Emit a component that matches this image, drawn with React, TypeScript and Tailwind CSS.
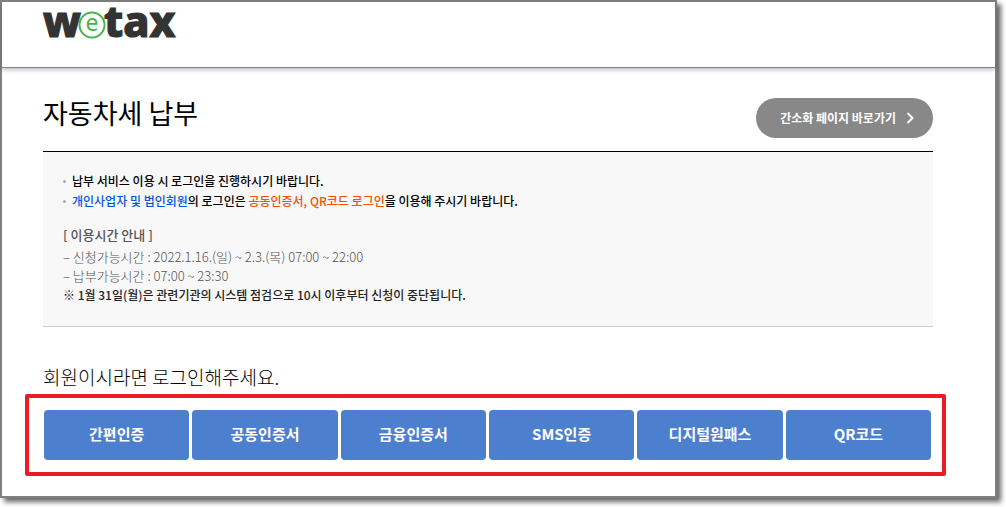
import React from "react";

const loginMethods = [
  "간편인증",
  "공동인증서",
  "금융인증서",
  "SMS인증",
  "디지털원패스",
  "QR코드",
];

function Logo() {
  return (
    <svg
      width="140"
      height="40"
      viewBox="0 0 140 40"
      role="img"
      aria-label="wetax"
      className="block overflow-visible font-['Noto_Sans',sans-serif]"
    >
      <g
        fill="#333333"
        stroke="#333333"
        strokeWidth="1.2"
        fontSize="43"
        fontWeight="800"
      >
        <text x="0" y="35">w</text>
        <text x="61" y="35">tax</text>
      </g>
      <circle cx="49" cy="23" r="12.5" fill="#ffffff" stroke="#45b549" strokeWidth="2" />
      <text x="49" y="29" fill="#45b549" fontSize="23" textAnchor="middle">
        e
      </text>
    </svg>
  );
}

function Bullet({ children }: { children: React.ReactNode }) {
  return (
    <li className="flex items-center gap-[6px]">
      <span className="size-[3px] shrink-0 rounded-full bg-[#aaaaaa]" />
      <span>{children}</span>
    </li>
  );
}

export default function App() {
  return (
    <div className="bg-white pr-[9px] pb-[9px] font-['Noto_Sans_CJK_KR',sans-serif] text-black">
      <div className="border-2 border-[#808080] bg-white pb-5 shadow-[4px_4px_5px_rgba(0,0,0,0.6)]">
        <header className="border-b border-[#7c8396] pb-[25px] pl-[41px] shadow-[0_2px_4px_rgba(0,0,0,0.25)]">
          <a href="#" className="block w-fit">
            <Logo />
          </a>
        </header>

        <main className="pt-[30px] pr-[62px] pl-[41px]">
          <div className="flex items-start justify-between pb-[13px]">
            <h1 className="text-[27px] leading-[30px]">자동차세 납부</h1>
            <a
              href="#"
              className="flex h-10 items-center gap-[10px] rounded-full bg-[#888888] pr-[19px] pl-6 text-xs font-bold text-white"
            >
              간소화 페이지 바로가기
              <svg width="8" height="12" viewBox="0 0 8 12" fill="none" aria-hidden="true">
                <path d="M1.5 1L6.5 6L1.5 11" stroke="#ffffff" strokeWidth="2" />
              </svg>
            </a>
          </div>

          <section className="border-t border-b border-t-black border-b-[#cccccc] bg-[#f8f8f8] px-5 pt-[19px] pb-[22px] text-xs">
            <ul className="leading-5 font-medium">
              <Bullet>납부 서비스 이용 시 로그인을 진행하시기 바랍니다.</Bullet>
              <Bullet>
                <span className="text-[#0055e0]">개인사업자 및 법인회원</span>의 로그인은{" "}
                <span className="text-[#f55000]">공동인증서, QR코드 로그인</span>을 이용해 주시기
                바랍니다.
              </Bullet>
            </ul>
            <h2 className="mt-3 text-[13px] leading-6 font-medium text-[#555555]">
              [ 이용시간 안내 ]
            </h2>
            <div className="leading-[19px] text-[#555555]">
              <p className="text-[13px] font-light">
                – 신청가능시간 : 2022.1.16.(일) ~ 2.3.(목) 07:00 ~ 22:00
              </p>
              <p className="text-[13px] font-light">– 납부가능시간 : 07:00 ~ 23:30</p>
              <p className="font-medium text-[#222222]">
                ※ 1월 31일(월)은 관련기관의 시스템 점검으로 10시 이후부터 신청이 중단됩니다.
              </p>
            </div>
          </section>

          <h2 className="mt-9 text-[19px] leading-7 font-light">회원이시라면 로그인해주세요.</h2>

          <div className="mt-[3px] -mr-[13px] -ml-[18px] grid grid-cols-6 gap-[3px] rounded-xs border-4 border-[#ed1c24] py-3 pr-[11px] pl-[15px]">
            {loginMethods.map((method) => (
              <button
                key={method}
                type="button"
                className="h-[50px] rounded-[4px] bg-[#4d7fcf] pb-[2px] text-[15px] font-bold text-white"
              >
                {method}
              </button>
            ))}
          </div>
        </main>
      </div>
    </div>
  );
}
